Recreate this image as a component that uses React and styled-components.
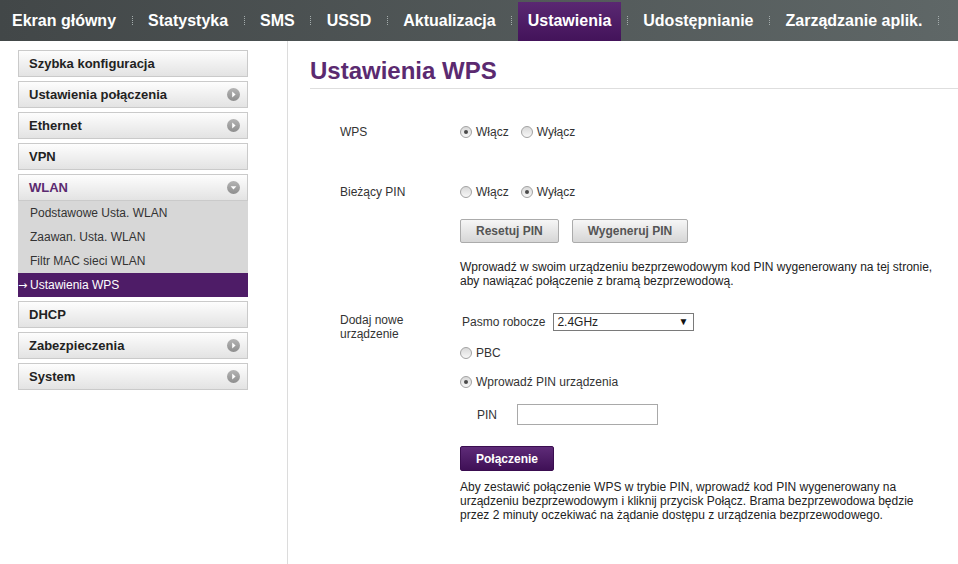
import React from "react";
import styled, { createGlobalStyle } from "styled-components";

const GlobalStyle = createGlobalStyle`
  html, body {
    margin: 0;
    padding: 0;
    background: #fff;
  }
  body {
    font-family: "Liberation Sans", Arial, Helvetica, sans-serif;
    color: #333;
  }
`;

const navItems = [
  "Ekran główny",
  "Statystyka",
  "SMS",
  "USSD",
  "Aktualizacja",
  "Ustawienia",
  "Udostępnianie",
  "Zarządzanie aplik.",
];

const menu = [
  { label: "Szybka konfiguracja" },
  { label: "Ustawienia połączenia", arrow: "right" },
  { label: "Ethernet", arrow: "right" },
  { label: "VPN" },
  {
    label: "WLAN",
    arrow: "down",
    open: true,
    children: [
      "Podstawowe Usta. WLAN",
      "Zaawan. Usta. WLAN",
      "Filtr MAC sieci WLAN",
      "Ustawienia WPS",
    ],
  },
  { label: "DHCP" },
  { label: "Zabezpieczenia", arrow: "right" },
  { label: "System", arrow: "right" },
];

const App = () => {
  return (
    <>
      <GlobalStyle />
      <TopNav>
        {navItems.map((item) => (
          <React.Fragment key={item}>
            <NavItem $active={item === "Ustawienia"}>{item}</NavItem>
            <NavSep />
          </React.Fragment>
        ))}
      </TopNav>
      <Layout>
        <Sidebar>
          {menu.map((m) => (
            <MenuGroup key={m.label}>
              <MenuItem $open={m.open}>
                {m.label}
                {m.arrow && <ArrowIcon dir={m.arrow} />}
              </MenuItem>
              {m.children && (
                <SubMenu>
                  {m.children.map((c) => {
                    const selected = c === "Ustawienia WPS";
                    return (
                      <SubItem key={c} $selected={selected}>
                        {selected && <CurrentMark>→</CurrentMark>}
                        {c}
                      </SubItem>
                    );
                  })}
                </SubMenu>
              )}
            </MenuGroup>
          ))}
        </Sidebar>

        <Main>
          <Title>Ustawienia WPS</Title>
          <Form>
            <Row $mt={36}>
              <Label>WPS</Label>
              <Field>
                <RadioLine>
                  <Radio checked>Włącz</Radio>
                  <Radio>Wyłącz</Radio>
                </RadioLine>
              </Field>
            </Row>

            <Row $mt={46}>
              <Label>Bieżący PIN</Label>
              <Field>
                <RadioLine>
                  <Radio>Włącz</Radio>
                  <Radio checked>Wyłącz</Radio>
                </RadioLine>
                <ButtonRow $mt={20}>
                  <GrayButton>Resetuj PIN</GrayButton>
                  <GrayButton>Wygeneruj PIN</GrayButton>
                </ButtonRow>
                <Note $mt={17}>
                  Wprowadź w swoim urządzeniu bezprzewodowym kod PIN wygenerowany
                  na tej stronie, aby nawiązać połączenie z bramą bezprzewodową.
                </Note>
              </Field>
            </Row>

            <Row $mt={25}>
              <Label>
                Dodaj nowe
                <br />
                urządzenie
              </Label>
              <Field>
                <SelectLine>
                  Pasmo robocze
                  <SelectBox>
                    <span>2.4GHz</span>
                    <SelectArrow>▼</SelectArrow>
                  </SelectBox>
                </SelectLine>
                <RadioLine $mt={15}>
                  <Radio>PBC</Radio>
                </RadioLine>
                <RadioLine $mt={15}>
                  <Radio checked>Wprowadź PIN urządzenia</Radio>
                </RadioLine>
                <PinRow $mt={15}>
                  <PinLabel>PIN</PinLabel>
                  <PinInput type="text" />
                </PinRow>
                <ButtonRow $mt={21}>
                  <PrimaryButton>Połączenie</PrimaryButton>
                </ButtonRow>
                <Note $mt={9}>
                  Aby zestawić połączenie WPS w trybie PIN, wprowadź kod PIN
                  wygenerowany na urządzeniu bezprzewodowym i kliknij przycisk
                  Połącz. Brama bezprzewodowa będzie przez 2 minuty oczekiwać na
                  żądanie dostępu z urządzenia bezprzewodowego.
                </Note>
              </Field>
            </Row>
          </Form>
        </Main>
      </Layout>
    </>
  );
};

const Radio = ({ checked, children }) => (
  <RadioWrap>
    <RadioDot $checked={checked} />
    {children}
  </RadioWrap>
);

const ArrowIcon = ({ dir }) => (
  <svg width="13" height="13" viewBox="0 0 13 13">
    <defs>
      <linearGradient id={"ag-" + dir} x1="0" y1="0" x2="0" y2="1">
        <stop offset="0" stopColor="#b4b4b4" />
        <stop offset="1" stopColor="#8e8e8e" />
      </linearGradient>
    </defs>
    <circle cx="6.5" cy="6.5" r="6.5" fill={"url(#ag-" + dir + ")"} />
    {dir === "down" ? (
      <path d="M3.6 5.2 L9.4 5.2 L6.5 8.6 Z" fill="#fff" />
    ) : (
      <path d="M5.2 3.6 L8.6 6.5 L5.2 9.4 Z" fill="#fff" />
    )}
  </svg>
);

const TopNav = styled.nav`
  display: flex;
  align-items: stretch;
  height: 41px;
  padding-left: 2px;
  background: linear-gradient(to right, #424748, #5f6767);
`;

const NavItem = styled.a`
  display: flex;
  align-items: center;
  margin-top: 2px;
  padding: 0 10px 2px;
  font-size: 16px;
  font-weight: bold;
  color: #fff;
  white-space: nowrap;
  background: ${(p) =>
    p.$active ? "linear-gradient(#5a2872, #43135a)" : "transparent"};
`;

const NavSep = styled.span`
  width: 12px;
  display: flex;
  align-items: center;
  justify-content: center;
  &::before {
    content: "";
    height: 9px;
    border-left: 1px dotted #a5adad;
  }
`;

const Layout = styled.div`
  display: flex;
  min-height: calc(100vh - 41px);
`;

const Sidebar = styled.aside`
  box-sizing: border-box;
  width: 288px;
  flex-shrink: 0;
  padding: 9px 0 0 18px;
  border-right: 1px solid #dcdcdc;
  display: flex;
  flex-direction: column;
  gap: 4px;
`;

const MenuGroup = styled.div`
  width: 230px;
`;

const MenuItem = styled.div`
  box-sizing: border-box;
  height: 27px;
  display: flex;
  align-items: center;
  justify-content: space-between;
  padding: 0 7px 0 10px;
  border: 1px solid #cacaca;
  background: linear-gradient(#fdfdfd, #e3e3e3);
  font-size: 13px;
  font-weight: bold;
  color: ${(p) => (p.$open ? "#5b2a70" : "#222")};
`;

const SubMenu = styled.div`
  background: #d7d7d7;
`;

const SubItem = styled.div`
  height: 24px;
  display: flex;
  align-items: center;
  padding-left: ${(p) => (p.$selected ? "0" : "12px")};
  font-size: 12px;
  color: ${(p) => (p.$selected ? "#fff" : "#333")};
  background: ${(p) => (p.$selected ? "#4e1c67" : "transparent")};
`;

const CurrentMark = styled.span`
  width: 12px;
  font-family: "DejaVu Sans", sans-serif;
  font-size: 11px;
`;

const Main = styled.main`
  flex: 1;
  padding: 16px 0 40px 22px;
`;

const Title = styled.h1`
  margin: 0;
  padding-bottom: 3px;
  font-size: 24px;
  line-height: 28px;
  font-weight: bold;
  color: #5b2a70;
  border-bottom: 1px solid #dedede;
`;

const Form = styled.div`
  padding-left: 30px;
  font-size: 12px;
  line-height: 14px;
  color: #333;
`;

const Row = styled.div`
  display: flex;
  margin-top: ${(p) => p.$mt || 0}px;
`;

const Label = styled.div`
  width: 120px;
  flex-shrink: 0;
`;

const Field = styled.div`
  flex: 1;
`;

const RadioLine = styled.div`
  display: flex;
  align-items: center;
  height: 14px;
  margin-top: ${(p) => p.$mt || 0}px;
`;

const RadioWrap = styled.span`
  display: inline-flex;
  align-items: center;
  margin-right: 12px;
`;

const RadioDot = styled.span`
  box-sizing: border-box;
  width: 12px;
  height: 12px;
  margin-right: 4px;
  border-radius: 50%;
  border: 1px solid #a2a2a2;
  background: linear-gradient(#d9d9d9, #f7f7f7);
  display: inline-flex;
  align-items: center;
  justify-content: center;
  &::after {
    content: "";
    width: 4px;
    height: 4px;
    border-radius: 50%;
    background: ${(p) => (p.$checked ? "#4a4a4a" : "transparent")};
  }
`;

const ButtonRow = styled.div`
  display: flex;
  gap: 13px;
  margin-top: ${(p) => p.$mt || 0}px;
`;

const GrayButton = styled.button`
  box-sizing: border-box;
  height: 24px;
  padding: 0 15px;
  border: 1px solid #ababab;
  border-radius: 2px;
  background: linear-gradient(#f6f6f6, #d6d6d6);
  font-family: inherit;
  font-size: 12px;
  font-weight: bold;
  color: #555;
`;

const PrimaryButton = styled.button`
  box-sizing: border-box;
  width: 94px;
  height: 25px;
  padding: 0;
  border: 1px solid #3a0d50;
  border-radius: 2px;
  background: linear-gradient(#5e2b78, #3f1056);
  font-family: inherit;
  font-size: 12px;
  font-weight: bold;
  color: #fff;
`;

const Note = styled.p`
  margin: ${(p) => p.$mt || 0}px 0 0;
  max-width: 482px;
  font-size: 12px;
  line-height: 14px;
  color: #222;
`;

const SelectLine = styled.div`
  display: flex;
  align-items: center;
  gap: 8px;
  height: 18px;
  padding-left: 2px;
`;

const SelectBox = styled.div`
  box-sizing: border-box;
  width: 141px;
  height: 18px;
  display: flex;
  align-items: center;
  justify-content: space-between;
  padding: 0 5px 0 3px;
  border: 1px solid #7a7a7a;
  background: #fff;
  color: #222;
`;

const SelectArrow = styled.span`
  font-size: 10px;
  color: #111;
`;

const PinRow = styled.div`
  display: flex;
  align-items: center;
  margin-top: ${(p) => p.$mt || 0}px;
  padding-left: 17px;
`;

const PinLabel = styled.span`
  width: 40px;
`;

const PinInput = styled.input`
  box-sizing: border-box;
  width: 141px;
  height: 21px;
  margin: 0;
  border: 1px solid #a9a9a9;
  font-family: inherit;
`;

export default App;
